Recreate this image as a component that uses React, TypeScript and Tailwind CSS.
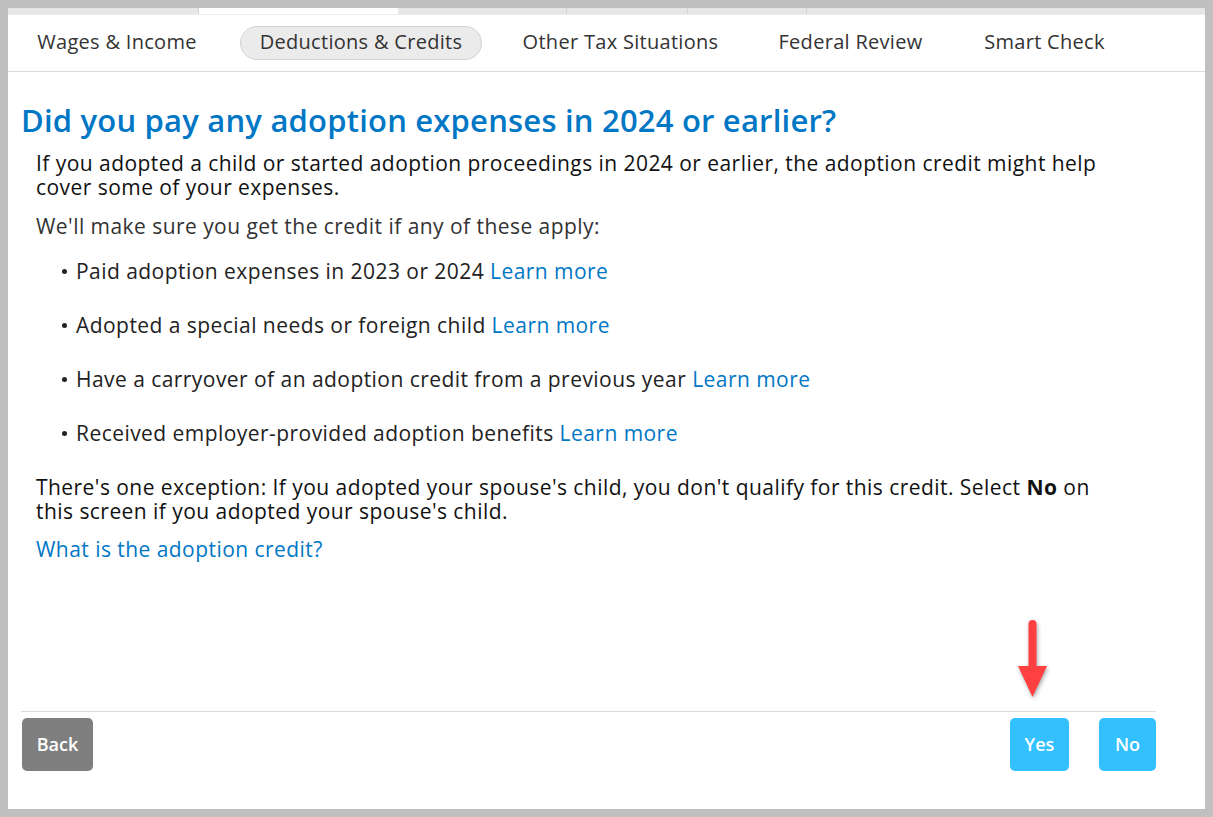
import React from "react";

const font = { fontFamily: "'Open Sans', 'Noto Sans', sans-serif" };

function Arrow() {
  return (
    <svg
      className="absolute left-[1016px] top-[618px]"
      width="34"
      height="84"
      viewBox="0 0 34 84"
      style={{ filter: "drop-shadow(1px 2px 2px rgba(0,0,0,0.35))" }}
    >
      <rect x="12.5" y="2" width="8" height="50" rx="4" fill="#ff4040" />
      <polygon points="2,48 31,48 16.5,79" fill="#ff4040" />
    </svg>
  );
}

export default function App() {
  const tabs: { label: string; w: string; active?: boolean }[] = [
    { label: "Wages & Income", w: "w-[200px]" },
    { label: "Deductions & Credits", w: "w-[242px]", active: true },
    { label: "Other Tax Situations", w: "w-[231px]" },
    { label: "Federal Review", w: "w-[183px]" },
    { label: "Smart Check", w: "w-[159px]" },
  ];
  const bullets = [
    "Paid adoption expenses in 2023 or 2024",
    "Adopted a special needs or foreign child",
    "Have a carryover of an adoption credit from a previous year",
    "Received employer-provided adoption benefits",
  ];
  return (
    <div className="w-[1213px] h-[817px] bg-[#c0c0c0] p-[8px] relative" style={font}>
      <div className="w-full h-full bg-white flex flex-col relative">
        {/* top strip */}
        <div className="h-[6px] flex bg-[#e6e6e6]">
          <div className="w-[191px] border-r border-[#d4d4d4]" />
          <div className="w-[199px] bg-white" />
          <div className="w-[169px] border-r border-[#d4d4d4]" />
          <div className="w-[121px] border-r border-[#d4d4d4]" />
          <div className="w-[119px] border-r border-[#d4d4d4]" />
          <div className="flex-1" />
        </div>
        {/* nav */}
        <div className="h-[58px] border-b border-[#dcdcdc] flex items-center pl-[9px] gap-[23px] border-t border-t-[#ececec]">
          {tabs.map((t) => (
            <div
              key={t.label}
              className={`${t.w} h-[34px] flex items-center justify-center text-[20px] tracking-[0.3px] text-[#333333] rounded-full whitespace-nowrap ${
                t.active ? "bg-[#ebebeb] border border-[#d2d2d2]" : ""
              }`}
            >
              <span className="-mt-[2px]">{t.label}</span>
            </div>
          ))}
        </div>
        {/* content */}
        <div className="pl-[13px] pr-[49px] flex flex-col flex-1">
          <h1 className="mt-[30px] text-[31px] leading-[36px] font-semibold text-[#0077c5] tracking-[0.2px]">
            Did you pay any adoption expenses in 2024 or earlier?
          </h1>
          <div className="pl-[15px] text-[21px] leading-[24px] tracking-[0.45px] text-[#111111] whitespace-nowrap">
            <p className="mt-[13px]">
              If you adopted a child or started adoption proceedings in 2024 or earlier, the adoption credit might help
              <br />
              cover some of your expenses.
            </p>
            <p className="mt-[15px] text-[#333333]">We'll make sure you get the credit if any of these apply:</p>
            <ul className="mt-[21px] flex flex-col gap-[30px] pl-[26px] text-[#222222]">
              {bullets.map((b) => (
                <li key={b} className="flex items-center">
                  <span className="w-[5px] h-[5px] rounded-full bg-[#222222] mr-[9px] mt-[1px]" />
                  <span>
                    {b} <span className="text-[#0077c5]">Learn more</span>
                  </span>
                </li>
              ))}
            </ul>
            <p className="mt-[30px]">
              There's one exception: If you adopted your spouse's child, you don't qualify for this credit. Select{" "}
              <b>No</b> on
              <br />
              this screen if you adopted your spouse's child.
            </p>
            <p className="mt-[14px] text-[#0077c5]">What is the adoption credit?</p>
          </div>
          <div className="flex-1" />
          <div className="border-t border-[#d9dde0] pt-[6px] pb-[38px] flex items-center">
            <button className="w-[71px] h-[53px] ml-[1px] rounded-[5px] bg-[#7f7f7f] text-white text-[18px] font-semibold">
              Back
            </button>
            <div className="flex-1" />
            <button className="w-[59px] h-[53px] rounded-[5px] bg-[#33c0ff] text-white text-[18px] font-semibold">
              Yes
            </button>
            <button className="w-[57px] h-[53px] ml-[30px] rounded-[5px] bg-[#33c0ff] text-white text-[18px] font-semibold">
              No
            </button>
          </div>
        </div>
      </div>
      <Arrow />
    </div>
  );
}
